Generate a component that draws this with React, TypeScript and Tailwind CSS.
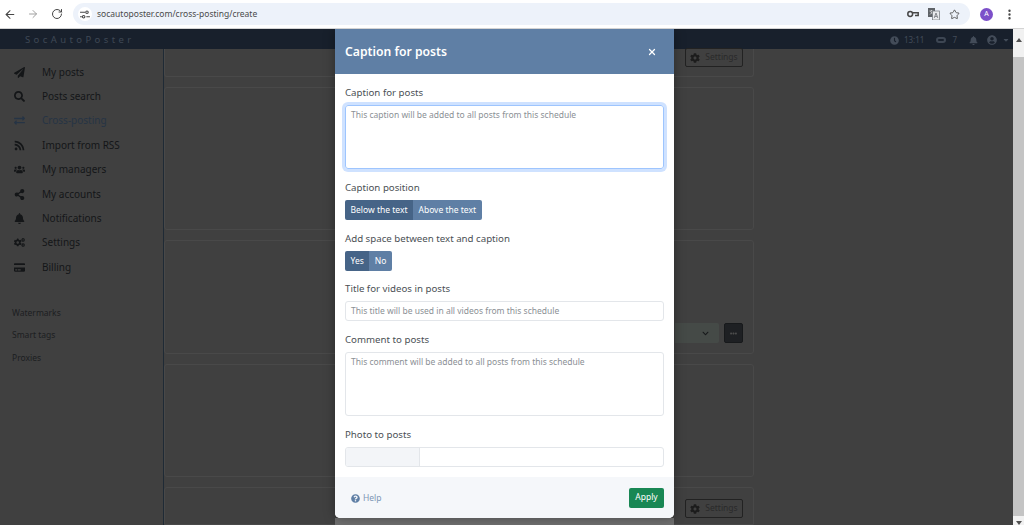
import { ArrowLeft, ArrowRight, MoreVertical, RotateCw, Star, X } from 'lucide-react'
import {
  FaBell,
  FaChevronDown,
  FaClock,
  FaCog,
  FaCogs,
  FaCreditCard,
  FaEllipsisH,
  FaExchangeAlt,
  FaPaperPlane,
  FaQuestionCircle,
  FaRss,
  FaSearch,
  FaShareAlt,
  FaUserCircle,
  FaUsers,
  FaCaretDown,
} from 'react-icons/fa'

const menu = [
  { label: 'My posts', icon: FaPaperPlane },
  { label: 'Posts search', icon: FaSearch },
  { label: 'Cross-posting', icon: FaExchangeAlt, active: true },
  { label: 'Import from RSS', icon: FaRss },
  { label: 'My managers', icon: FaUsers },
  { label: 'My accounts', icon: FaShareAlt },
  { label: 'Notifications', icon: FaBell },
  { label: 'Settings', icon: FaCogs },
  { label: 'Billing', icon: FaCreditCard },
]

function BrowserBar() {
  return (
    <div className="relative z-10 h-[29px] bg-white flex items-center text-[#474747] shrink-0 border-b border-[#d4d4d4]">
      <ArrowLeft size={13} strokeWidth={2} className="ml-[3px] w-[14px]" />
      <ArrowRight size={12} strokeWidth={2} className="ml-[10px] text-[#a0a0a0]" />
      <RotateCw size={12} strokeWidth={2} className="ml-[12px]" />
      <div className="ml-[10px] w-[897px] h-[22px] rounded-full bg-[#edf2fa] flex items-center">
        <div className="ml-[5px] w-[14px] h-[14px] rounded-full bg-white flex items-center justify-center">
          <svg width="10" height="9" viewBox="0 0 11 10" fill="none" stroke="#474747" strokeWidth="1.2">
            <path d="M0 2.5h5.5M0 7.5h2M7 7.5h4" />
            <circle cx="7.7" cy="2.5" r="1.4" />
            <circle cx="4" cy="7.5" r="1.4" />
          </svg>
        </div>
        <span className="ml-[5px] text-[8.5px] text-[#4a4a4a]">socautoposter.com/cross-posting/create</span>
        <div className="ml-auto flex items-center mr-[10px]">
          <svg width="12" height="8" viewBox="0 0 12 8" fill="none" stroke="#474747" strokeWidth="1.5">
            <circle cx="3.2" cy="4" r="2.4" />
            <path d="M5.6 2.8h5.6v2.6H8" />
          </svg>
          <svg className="ml-[9px]" width="12" height="12" viewBox="0 0 12 12">
            <rect x="0" y="0" width="7" height="9" fill="#5f6368" />
            <path d="M1.5 3h4M3.5 2v1M2 6.5l3-3M2.5 3.5l2.5 3" stroke="#fff" strokeWidth="0.6" fill="none" />
            <rect x="4.5" y="3" width="7" height="9" fill="#e8eaed" stroke="#70757a" strokeWidth="0.7" />
            <path d="M6.2 10l1.8-5 1.8 5M6.9 8.4h2.2" stroke="#5f6368" strokeWidth="0.7" fill="none" />
          </svg>
          <Star size={11} strokeWidth={1.8} className="ml-[9px]" />
        </div>
      </div>
      <div className="ml-[10px] w-[13px] h-[13px] rounded-full bg-[#7c4fc9] text-white text-[7px] flex items-center justify-center">
        A
      </div>
      <MoreVertical size={13} strokeWidth={2.4} className="ml-[10px]" />
    </div>
  )
}

function Card({ className, children }: { className: string; children?: React.ReactNode }) {
  return (
    <div className={`border border-[#494949] rounded-[3px] flex justify-end pr-[10px] shrink-0 ${className}`}>
      {children}
    </div>
  )
}

function SettingsButton() {
  return (
    <div className="w-[58px] h-[19px] border border-[#222] rounded-[2px] flex items-center justify-center gap-[5px] text-[#1c1c1c] text-[8.5px]">
      <FaCog size={10} />
      <span className="text-[#2a2a2a]">Settings</span>
    </div>
  )
}

function Label({ children }: { children: React.ReactNode }) {
  return <div className="text-[9.7px] leading-[15px] pt-[1px] text-[#4b5055] mb-[5px]">{children}</div>
}

function Toggle({ first, second, className }: { first: string; second: string; className: string }) {
  return (
    <div className={`flex h-[20px] w-fit text-[8.5px] text-white rounded-[2px] overflow-hidden pt-0 ${className}`}>
      <div className="px-[5.5px] pt-[1px] bg-[#466487] flex items-center">{first}</div>
      <div className="px-[5.5px] pt-[1px] bg-[#5f7fa5] flex items-center">{second}</div>
    </div>
  )
}

function Modal() {
  return (
    <div className="absolute left-[335px] top-0 w-[339px] h-[489px] bg-white rounded-b-[5px] shadow-[0_0_12px_rgba(0,0,0,0.35)] flex flex-col">
      <div className="h-[45px] bg-[#5f7fa5] flex items-center justify-between pl-[10px] pr-[17px] text-white shrink-0">
        <span className="text-[12.2px] font-semibold pt-[2px]">Caption for posts</span>
        <X size={10} strokeWidth={3} />
      </div>
      <div className="px-[10px] pt-[10px] flex-1">
        <Label>Caption for posts</Label>
        <div className="h-[64px] border border-[#9ec5fe] rounded-[3px] shadow-[0_0_0_3px_rgba(13,110,253,0.2)] px-[5px] py-[3px] text-[8.5px] leading-[12px] text-[#8b9095] mb-[10px]">
          This caption will be added to all posts from this schedule
        </div>
        <Label>Caption position</Label>
        <Toggle first="Below the text" second="Above the text" className="mb-[10px]" />
        <Label>Add space between text and caption</Label>
        <Toggle first="Yes" second="No" className="mb-[9px]" />
        <Label>Title for videos in posts</Label>
        <div className="h-[20px] border border-[#e3e6ea] rounded-[3px] px-[5px] pt-[1px] flex items-center text-[8.5px] text-[#8b9095] mb-[10px]">
          This title will be used in all videos from this schedule
        </div>
        <Label>Comment to posts</Label>
        <div className="h-[64px] border border-[#e3e6ea] rounded-[3px] px-[5px] py-[3px] text-[8.5px] leading-[12px] text-[#8b9095] mb-[10px]">
          This comment will be added to all posts from this schedule
        </div>
        <Label>Photo to posts</Label>
        <div className="h-[20px] border border-[#e3e6ea] rounded-[3px] flex overflow-hidden">
          <div className="w-[74px] bg-[#f3f5f8] border-r border-[#e3e6ea]" />
        </div>
      </div>
      <div className="h-[41px] bg-[#f5f7fa] rounded-b-[5px] flex items-center justify-between pl-[6px] pr-[10px] shrink-0">
        <div className="flex items-center gap-[3px] text-[8.5px] text-[#7d96b5] pl-[10px] pt-[1px]">
          <FaQuestionCircle size={9} className="text-[#5f7fa5]" />
          Help
        </div>
        <div className="w-[35px] h-[20px] bg-[#198754] rounded-[2px] text-white text-[8.5px] flex items-center justify-center">
          Apply
        </div>
      </div>
    </div>
  )
}

export default function App() {
  return (
    <div className="w-[1024px] h-[525px] overflow-hidden flex flex-col font-['Noto_Sans',sans-serif]">
      <BrowserBar />
      <div className="relative flex-1 flex">
        <div className="flex-1 flex flex-col bg-[#404040] min-w-0">
          <div className="h-[20px] bg-[#18202c] flex items-center justify-between shrink-0 pt-[2px]">
            <span className="ml-[25px] text-[9.5px] tracking-[3.4px] text-[#3f4855]">SocAutoPoster</span>
            <div className="flex items-center text-[8px] text-[#434c59] mr-[3px]">
              <FaClock size={9} />
              <span className="ml-[5px]">13:11</span>
              <span className="ml-[12px] w-[10px] h-[6px] rounded-full border-2 border-[#3d4653]" />
              <span className="ml-[6px]">7</span>
              <FaBell size={9} className="ml-[12px]" />
              <FaUserCircle size={10} className="ml-[9px]" />
              <FaCaretDown size={8} className="ml-[5px]" />
            </div>
          </div>
          <div className="flex-1 flex min-h-0">
            <aside className="w-[164px] border-r border-[#1f2a35] shrink-0 pt-[11px]">
              {menu.map((item) => (
                <div
                  key={item.label}
                  className={`h-[24.4px] flex items-center text-[10px] ${item.active ? 'text-[#263445]' : 'text-[#141618]'}`}
                >
                  <span className="w-[42px] pl-[14px] flex">
                    <item.icon size={11} />
                  </span>
                  {item.label}
                </div>
              ))}
              <div className="mt-[26px] pl-[12px] flex flex-col gap-[9.5px] text-[8.5px] leading-[13px] text-[#1c1e20]">
                <span>Watermarks</span>
                <span>Smart tags</span>
                <span>Proxies</span>
              </div>
            </aside>
            <main className="w-[590px] shrink-0 flex flex-col gap-[10px]">
              <Card className="h-[28px] items-start rounded-t-none border-t-0">
                <div className="-mt-[1px]">
                  <SettingsButton />
                </div>
              </Card>
              <Card className="h-[143px]" />
              <Card className="h-[114px] items-start pt-[82px]">
                <div className="flex items-center gap-[5px]">
                  <div className="w-[44px] h-[20px] bg-[#454a47] rounded-r-[2px] flex items-center justify-end pr-[10px]">
                    <FaChevronDown size={7} className="text-[#17191b]" />
                  </div>
                  <div className="w-[19px] h-[20px] bg-[#1e2023] rounded-[2px] border border-[#17191b] flex items-center justify-center text-[#4c4c4c]">
                    <FaEllipsisH size={7} />
                  </div>
                </div>
              </Card>
              <Card className="h-[113px]" />
              <Card className="h-[38px] rounded-b-none items-start pt-[11px]">
                <SettingsButton />
              </Card>
            </main>
          </div>
        </div>
        <div className="w-[11px] bg-[#f1f1f1] shrink-0 flex flex-col items-center">
          <div className="h-[28px] flex pt-[9px]">
            <span className="w-0 h-0 border-x-[3px] border-x-transparent border-b-[4px] border-b-[#505050]" />
          </div>
          <div className="w-full h-[459px] bg-[#c4c4c4]" />
          <div className="flex pt-[5px]">
            <span className="w-0 h-0 border-x-[3px] border-x-transparent border-t-[4px] border-t-[#505050]" />
          </div>
        </div>
        <div className="absolute left-[335px] top-[489px] w-[339px] h-[7px] bg-[#6f6f6f]" />
        <Modal />
      </div>
    </div>
  )
}
